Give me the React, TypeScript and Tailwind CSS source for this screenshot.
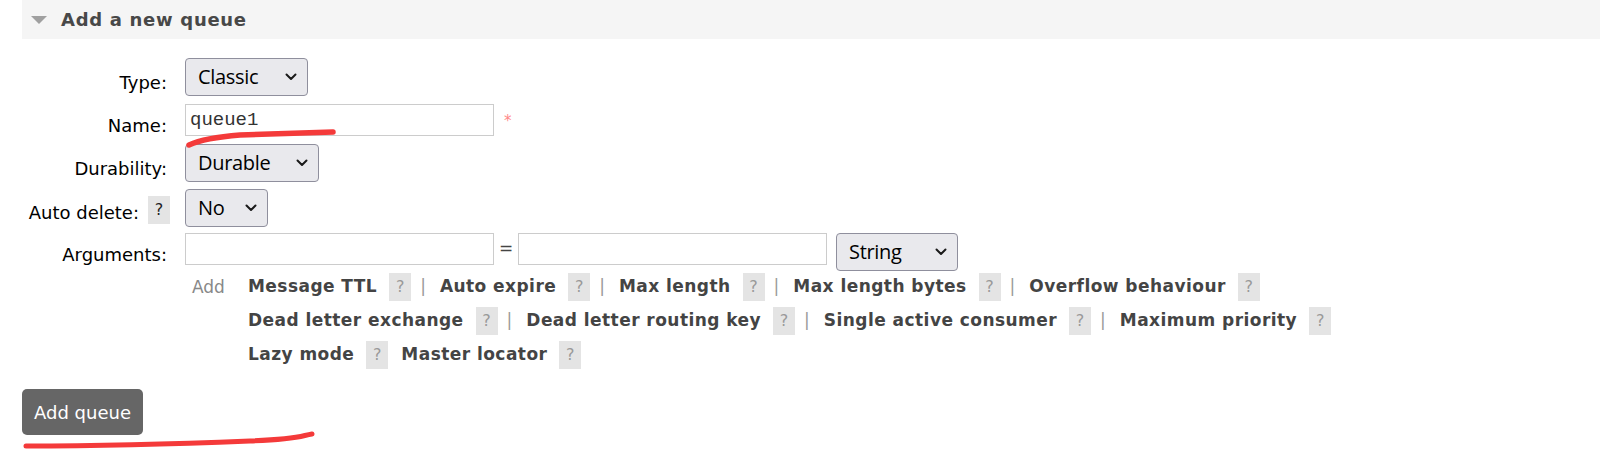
import React from 'react';

const Chevron = () => (
    <svg width="12" height="8" viewBox="0 0 12 8" className="shrink-0">
        <path d="M1.5 1.5 L6 6 L10.5 1.5" fill="none" stroke="#1a1a1a" strokeWidth="2" strokeLinecap="round" strokeLinejoin="round" />
    </svg>
);

const FakeSelect = ({ value, width }: { value: string; width: string }) => (
    <div className={`${width} h-[38px] flex items-center justify-between pl-[12px] pr-[10px] bg-[#e9e9ed] border border-[#8f8f9d] rounded-[4px] text-[20px] text-black font-['Open_Sans',sans-serif] tracking-[-0.3px]`}>
        <span>{value}</span>
        <Chevron />
    </div>
);

const Help = ({ dark }: { dark?: boolean }) => (
    <span className={`inline-flex w-[22px] h-[28px] items-center justify-center bg-[#e4e4e4] text-[16px] leading-[28px] font-normal tracking-normal ${dark ? 'text-[#222]' : 'text-[#999]'}`}>
        ?
    </span>
);

const Label = ({ children, tight }: { children: React.ReactNode; tight?: boolean }) => (
    <div className={`w-[170px] h-[32px] shrink-0 flex justify-end items-end gap-[9px] text-[18px] leading-[20px] text-black ${tight ? 'pr-0' : 'pr-[3px]'}`}>
        {children}
    </div>
);

type Arg = { label: string; sep: boolean };

const argRows: Arg[][] = [
    [
        { label: 'Message TTL', sep: true },
        { label: 'Auto expire', sep: true },
        { label: 'Max length', sep: true },
        { label: 'Max length bytes', sep: true },
        { label: 'Overflow behaviour', sep: false },
    ],
    [
        { label: 'Dead letter exchange', sep: true },
        { label: 'Dead letter routing key', sep: true },
        { label: 'Single active consumer', sep: true },
        { label: 'Maximum priority', sep: false },
    ],
    [
        { label: 'Lazy mode', sep: false },
        { label: 'Master locator', sep: false },
    ],
];

export default function App() {
    return (
        <div className="relative w-[1600px] h-[460px] bg-white font-['DejaVu_Sans',sans-serif] overflow-hidden">
            {/* section header */}
            <div className="ml-[22px] h-[39px] bg-[#f5f5f5] flex items-center pl-[9px] gap-[14px]">
                <svg width="16" height="8" viewBox="0 0 16 8">
                    <path d="M0 0 L16 0 L8 8 Z" fill="#a0a0a0" />
                </svg>
                <h2 className="text-[18px] font-bold text-[#484848] tracking-[0.7px]">Add a new queue</h2>
            </div>

            <div className="flex flex-col">
                <div className="flex items-center gap-[15px] mt-[19px]">
                    <Label>Type:</Label>
                    <FakeSelect value="Classic" width="w-[123px]" />
                </div>

                <div className="flex items-center gap-[15px] mt-[8px]">
                    <Label>Name:</Label>
                    <div className="w-[309px] h-[32px] border border-[#cccccc] flex items-center pl-[4px] font-['Liberation_Mono',monospace] text-[19px] text-[#333]">
                        queue1
                    </div>
                    <span className="ml-[-5px] text-[15px] text-[#f88] pt-[2px]">*</span>
                </div>

                <div className="flex items-center gap-[15px] mt-[8px]">
                    <Label>Durability:</Label>
                    <FakeSelect value="Durable" width="w-[134px]" />
                </div>

                <div className="flex items-center gap-[15px] mt-[7px]">
                    <Label tight>
                        <span className="pb-[1px]">Auto delete:</span>
                        <Help dark />
                    </Label>
                    <FakeSelect value="No" width="w-[83px]" />
                </div>

                <div className="flex items-start gap-[15px] mt-[6px]">
                    <Label>Arguments:</Label>
                    <div className="flex flex-col">
                        <div className="flex items-start">
                            <div className="w-[309px] h-[32px] border border-[#cccccc]" />
                            <span className="w-[24px] h-[32px] flex items-center justify-center text-[17px] text-[#444]">=</span>
                            <div className="w-[309px] h-[32px] border border-[#cccccc]" />
                            <div className="ml-[9px]">
                                <FakeSelect value="String" width="w-[122px]" />
                            </div>
                        </div>

                        <div className="flex mt-[2px]">
                            <span className="w-[63px] pl-[7px] pt-[2px] text-[17px] text-[#888] leading-[24px]">Add</span>
                            <div className="flex flex-col gap-[6px]">
                                {argRows.map((row, i) => (
                                    <div key={i} className="flex items-center">
                                        {row.map((arg) => (
                                            <div key={arg.label} className="flex items-center">
                                                <span className="text-[17px] font-bold text-[#444] tracking-[0.45px] mr-[12px]">{arg.label}</span>
                                                <Help />
                                                {arg.sep ? (
                                                    <span className="text-[17px] text-[#999] ml-[9px] mr-[14px]">|</span>
                                                ) : (
                                                    <span className="w-[13px]" />
                                                )}
                                            </div>
                                        ))}
                                    </div>
                                ))}
                            </div>
                        </div>
                    </div>
                </div>

                <div className="mt-[20px] ml-[22px]">
                    <button className="w-[121px] h-[46px] bg-[#666666] rounded-[5px] text-white text-[18px] flex items-center pl-[12px]">
                        Add queue
                    </button>
                </div>
            </div>

            {/* hand-drawn red annotation strokes */}
            <svg className="absolute inset-0 pointer-events-none" width="1600" height="460">
                <path d="M189 145 C 200 140, 215 137, 240 135 L 333 132" fill="none" stroke="#f43a3a" strokeWidth="5.5" strokeLinecap="round" />
                <path d="M26 446 C 100 446, 200 443, 250 441 S 300 436, 312 434" fill="none" stroke="#f43a3a" strokeWidth="5" strokeLinecap="round" />
            </svg>
        </div>
    );
}
